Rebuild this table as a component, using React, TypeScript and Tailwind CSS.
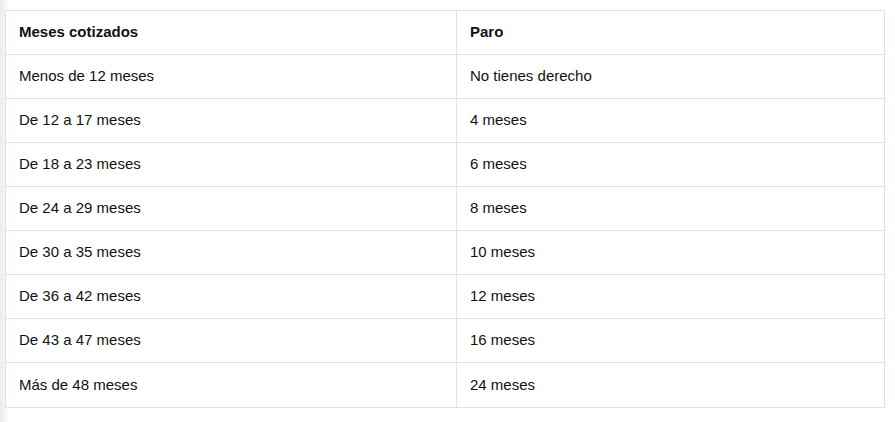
import React from "react";

const rows: [string, string][] = [
  ["Menos de 12 meses", "No tienes derecho"],
  ["De 12 a 17 meses", "4 meses"],
  ["De 18 a 23 meses", "6 meses"],
  ["De 24 a 29 meses", "8 meses"],
  ["De 30 a 35 meses", "10 meses"],
  ["De 36 a 42 meses", "12 meses"],
  ["De 43 a 47 meses", "16 meses"],
  ["Más de 48 meses", "24 meses"],
];

export default function App() {
  return (
    <div
      className="w-[895px] h-[422px] bg-[linear-gradient(to_right,#ebebeb,#ffffff_10px)] pt-[10px] pl-[5px]"
      style={{ fontFamily: '"Liberation Sans", Arial, sans-serif' }}
    >
      <div className="w-[880px] border border-[#eadfd6] bg-white text-[15px] text-[#111111]">
        <div className="flex h-[44px] border-b border-[#eadfd6] font-bold">
          <div className="w-[451px] border-r border-[#eadfd6] flex items-center pl-[13px]">
            Meses cotizados
          </div>
          <div className="flex-1 flex items-center pl-[13px]">Paro</div>
        </div>
        {rows.map(([a, b], i) => (
          <div
            key={i}
            className={`flex h-[44px] ${i < rows.length - 1 ? "border-b border-[#eadfd6]" : ""}`}
          >
            <div className="w-[451px] border-r border-[#eadfd6] flex items-center pl-[13px]">
              {a}
            </div>
            <div className="flex-1 flex items-center pl-[13px]">{b}</div>
          </div>
        ))}
      </div>
    </div>
  );
}
